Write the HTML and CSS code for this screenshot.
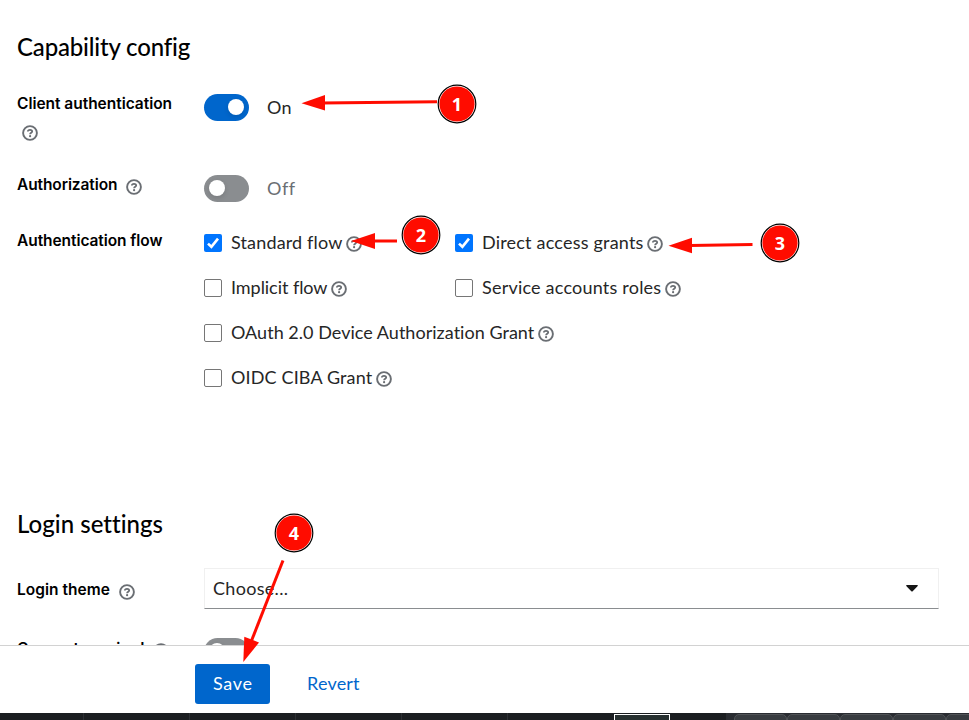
FILE: index.html
```html
<!DOCTYPE html>
<html lang="en">
<head>
<meta charset="utf-8">
<title>Client settings</title>
<link rel="stylesheet" href="styles.css">
</head>
<body>
<svg class="defs" width="0" height="0">
  <symbol id="help" viewBox="0 0 16 16">
    <circle cx="8" cy="8" r="6.900" fill="none" stroke="#6a6e73" stroke-width="1.900"/>
    <path d="M5.800 6.500C5.900 5.300 6.900 4.800 8 4.800c1.200 0 2.200.6 2.200 1.700C10.200 7.900 8.100 7.800 8.100 9.300" fill="none" stroke="#6a6e73" stroke-width="1.800"/>
    <circle cx="8.100" cy="11.200" r="1.100" fill="#6a6e73"/>
  </symbol>
  <symbol id="tick" viewBox="0 0 18 18">
    <path d="M4 9.600l3.400 3.200L14 4.600" fill="none" stroke="#fff" stroke-width="2.600"/>
  </symbol>
</svg>

<main class="page">
  <h2 class="title title-capability">Capability config</h2>

  <div class="row row-client">
    <div class="label"><span class="l-client">Client authentication</span><svg class="help help-wrapped"><use href="#help"/></svg></div>
    <div class="switch"><span class="track on"><span class="knob"></span></span><span class="t-on">On</span></div>
  </div>

  <div class="row row-authz">
    <div class="label"><span class="l-authz">Authorization</span><svg class="help"><use href="#help"/></svg></div>
    <div class="switch off-text"><span class="track"><span class="knob"></span></span><span class="t-off">Off</span></div>
  </div>

  <div class="row row-flow">
    <div class="label"><span class="l-flow">Authentication flow</span></div>
    <div class="checks">
      <div class="check"><span class="box checked"><svg><use href="#tick"/></svg></span><span class="t-standard">Standard flow</span><svg class="help"><use href="#help"/></svg></div>
      <div class="check"><span class="box checked"><svg><use href="#tick"/></svg></span><span class="t-direct">Direct access grants</span><svg class="help"><use href="#help"/></svg></div>
      <div class="check"><span class="box"></span><span class="t-implicit">Implicit flow</span><svg class="help"><use href="#help"/></svg></div>
      <div class="check"><span class="box"></span><span class="t-service">Service accounts roles</span><svg class="help"><use href="#help"/></svg></div>
      <div class="check wide"><span class="box"></span><span class="t-oauth">OAuth 2.0 Device Authorization Grant</span><svg class="help"><use href="#help"/></svg></div>
      <div class="check wide"><span class="box"></span><span class="t-oidc">OIDC CIBA Grant</span><svg class="help"><use href="#help"/></svg></div>
    </div>
  </div>

  <h2 class="title title-login">Login settings</h2>

  <div class="row row-theme">
    <div class="label"><span class="l-theme">Login theme</span><svg class="help"><use href="#help"/></svg></div>
    <div class="select"><span class="t-choose">Choose...</span><svg class="caret" viewBox="0 0 12 7"><path d="M.3 0h11.400q.3.900-.400 1.500L6.700 6.300q-.7.600-1.400 0L.7 1.500Q0 .9.300 0z" fill="#151515"/></svg></div>
  </div>

  <div class="row row-consent">
    <div class="label"><span class="l-consent">Consent required</span><svg class="help"><use href="#help"/></svg></div>
    <div class="switch"><span class="track"><span class="knob"></span></span></div>
  </div>
</main>

<footer class="actions">
  <button class="btn primary"><span class="t-save">Save</span></button>
  <button class="btn link"><span class="t-revert">Revert</span></button>
</footer>

<div class="taskbar">
  <div class="cell first"></div><div class="cell"></div><div class="cell"></div><div class="cell"></div><div class="cell"></div><div class="cell"></div>
  <div class="active-window"></div>
  <div class="tray"><i></i><i></i><i></i><i></i><i></i></div>
</div>

<svg class="annotations" viewBox="0 0 969 720" width="969" height="720">
  <g fill="none" stroke="#ff0c00" stroke-width="3">
    <path d="M437 101.800L322 103"/>
    <path d="M397 241L370 241"/>
    <path d="M752.500 244.500L690 245.500"/>
    <path d="M283 560.500L251 642"/>
  </g>
  <g fill="#ff0c00">
    <path d="M301.500 103.200L325 95v15.500z"/>
    <path d="M351 241l24-8v16z"/>
    <path d="M668.500 245.800l23.500-8v15.500z"/>
    <path d="M243.300 662L244.300 636.800L259 642.500z"/>
  </g>
  <g class="pin" transform="translate(457 104)"><circle r="18.800"/><circle class="ring" r="17.600"/><text y="7">1</text></g>
  <g class="pin" transform="translate(421 235)"><circle r="18.800"/><circle class="ring" r="17.600"/><text y="7">2</text></g>
  <g class="pin" transform="translate(780 243)"><circle r="18.800"/><circle class="ring" r="17.600"/><text y="7">3</text></g>
  <g class="pin" transform="translate(294 533)"><circle r="18.800"/><circle class="ring" r="17.600"/><text y="7">4</text></g>
</svg>
</body>
</html>
```
FILE: styles.css
```css
* { box-sizing: border-box; }
body {
  margin: 0;
  width: 969px;
  height: 720px;
  overflow: hidden;
  position: relative;
  background: #fff;
  color: #262626;
  font: 18px/27px Lato, "Open Sans", sans-serif;
  font-variant-ligatures: none;
}
.defs { display: block; height: 0; }
span { white-space: nowrap; }

.page { height: 645px; padding: 32px 30px 0 17px; overflow: hidden; }
.title { margin: 0; height: 30px; font-size: 24px; line-height: 30px; font-weight: 500; color: #000; }
.title-capability { letter-spacing: -.17px; }
.title-login { letter-spacing: .03px; }

.row { display: grid; grid-template-columns: 187px 1fr; }
.row-client { margin-top: 32px; height: 81px; }
.row-authz { height: 54px; }
.row-flow { height: 280px; }
.row-theme { margin-top: 29px; height: 70px; }

.label { display: flex; flex-wrap: wrap; align-content: flex-start; align-items: center; font: 600 15.5px/20px Inter, sans-serif; color: #000; }
.help { display: block; width: 16px; height: 16px; margin: 3px 0 0 9px; flex: none; }
.label .help { margin-top: 3px; }
.label .help-wrapped { margin: 11px 90px 0 5px; }
.row-flow .label { padding-top: 2px; }
.row-theme .label { padding-top: 12px; }
.row-consent .label { padding-top: 1px; }

.switch { display: flex; align-items: center; height: 27px; gap: 18px; }
.track { width: 45px; height: 27px; border-radius: 14px; padding: 5px; background: #8a8d90; display: flex; }
.track.on { background: #06c; justify-content: flex-end; }
.knob { width: 16px; height: 16px; border-radius: 50%; background: #fff; box-shadow: 0 2px 5px rgba(0, 0, 0, .13); }
.off-text { color: #6a6e73; }

.checks { display: grid; grid-template-columns: 251px 1fr; grid-auto-rows: 45px; align-content: start; }
.check { display: flex; align-items: center; height: 27px; }
.wide { grid-column: 1 / -1; }
.box { width: 18px; height: 18px; margin-right: 9px; border: 1px solid #767676; border-radius: 2px; flex: none; }
.box.checked { border: 0; background: #0075ff; }
.box svg { display: block; width: 18px; height: 18px; }
.check .help { margin: 3px 0 0 3.500px; }

.select { display: flex; align-items: center; justify-content: space-between; height: 41px; padding: 0 20px 0 8px; border: 1px solid #f0f0f0; border-bottom-color: #8a8d90; }
.caret { width: 12px; height: 7px; }

.actions { height: 68px; border-top: 1px solid #d2d2d2; background: #fff; padding: 18px 0 0 195px; display: flex; gap: 19px; }
.btn { height: 40px; border: 0; border-radius: 3px; padding: 0 18px 2px; font: inherit; background: none; color: #06c; }
.btn.primary { background: #06c; color: #fff; width: 75px; }

.taskbar { display: flex; height: 7px; background: #1b1e21; position: relative; }
.cell { width: 106px; border-right: 1px solid #2c2f33; }
.cell.first { width: 84px; }
.cell:nth-child(6) { border: 0; }
.active-window { position: absolute; left: 614px; top: 1px; width: 56px; height: 8px; border: 1px solid #fff; background: #273030; }
.tray { position: absolute; left: 726px; right: 0; top: 0; height: 7px; padding: 1px 0 0 8px; background: #292c31; display: flex; overflow: hidden; }
.tray i { width: 53px; height: 12px; flex: none; border: 1px solid #505356; border-radius: 5px; background: #383c40; }

.l-client { letter-spacing: -.03px; }
.l-authz { letter-spacing: -.1px; }
.l-flow { letter-spacing: -.07px; }
.l-theme { letter-spacing: .03px; }
.l-consent { letter-spacing: -.15px; }
.t-on { letter-spacing: .3px; }
.t-off { letter-spacing: .6px; }
.t-standard { letter-spacing: .15px; }
.t-direct { letter-spacing: .2px; }
.t-implicit { letter-spacing: -.05px; }
.t-service { letter-spacing: .21px; }
.t-oauth { letter-spacing: .03px; }
.t-oidc { letter-spacing: .14px; }
.t-choose { letter-spacing: .3px; }
.t-save { letter-spacing: .7px; }
.t-revert { letter-spacing: .2px; }

.annotations { position: absolute; left: 0; top: 0; pointer-events: none; }
.pin circle { fill: #fff; stroke: #000; stroke-width: 1.200; }
.pin .ring { fill: #ff0c00; stroke: none; }
.pin text { fill: #fff; font: 700 18px "Open Sans", sans-serif; text-anchor: middle; }
```
